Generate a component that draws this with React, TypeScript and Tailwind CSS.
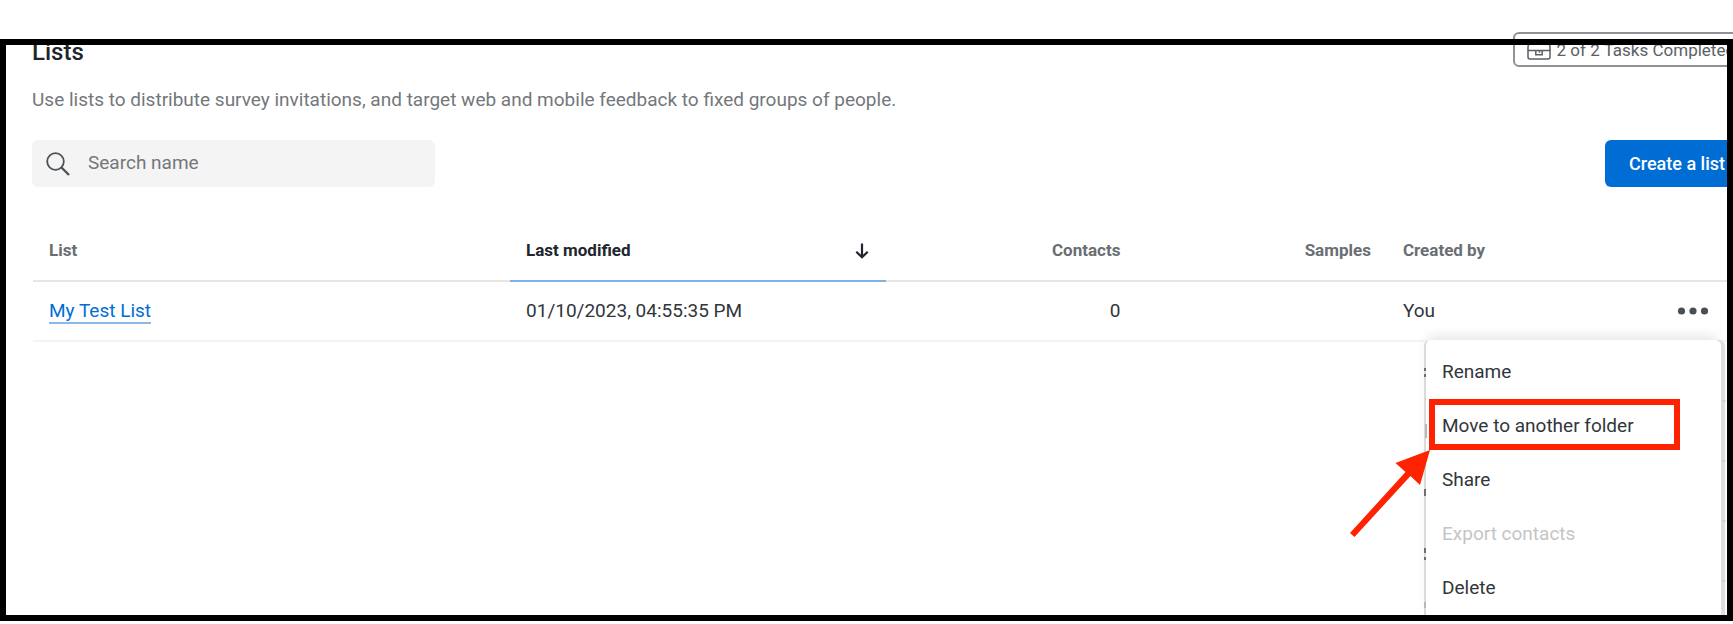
import type { ReactNode } from 'react';

interface MenuItem {
  label: string;
  disabled?: boolean;
  highlighted?: boolean;
}

const menuItems: MenuItem[] = [
  { label: 'Rename' },
  { label: 'Move to another folder', highlighted: true },
  { label: 'Share' },
  { label: 'Export contacts', disabled: true },
  { label: 'Delete' },
];

function TasksIcon() {
  return (
    <svg className="w-6 h-6 flex-shrink-0" viewBox="0 0 24 24" fill="none" stroke="#5b6065" strokeWidth="1.5" aria-hidden="true">
      <path d="M1 11.500V8Q1 4.500 4.500 4.500h15Q23 4.500 23 8v3.500" />
      <path d="M1 11.500h22V18q0 2-2 2H3q-2 0-2-2z" />
      <path d="M8.800 11.500v4.200h6.400v-4.200M12.500 11.500v2.200" />
    </svg>
  );
}

function SearchIcon() {
  return (
    <svg className="w-6 h-6 flex-shrink-0" viewBox="0 0 24 24" fill="none" stroke="#4d5359" strokeWidth="1.8" aria-hidden="true">
      <circle cx="9.5" cy="9.5" r="8.3" />
      <path d="M15.5 15.5 23 23" strokeWidth="2.4" />
    </svg>
  );
}

function SortArrow() {
  return (
    <svg className="w-4 h-4" viewBox="0 0 16 16" fill="none" stroke="#20262c" strokeWidth="2.2" aria-hidden="true">
      <path d="M8 .5v14M2.3 8.8 8 14.3l5.7-5.5" />
    </svg>
  );
}

function Dots() {
  return (
    <svg className="w-8 h-2" viewBox="0 0 32 8" fill="#4a4f55" aria-hidden="true">
      <circle cx="4.5" cy="4" r="3.6" />
      <circle cx="16" cy="4" r="3.6" />
      <circle cx="27.5" cy="4" r="3.6" />
    </svg>
  );
}

function HeaderCell({ children, className = '' }: { children?: ReactNode; className?: string }) {
  return (
    <th scope="col" className={`h-[60px] px-4 text-[17px] font-bold border-b-2 ${className}`}>
      {children}
    </th>
  );
}

// slivers of the covered page that show along both edges of the menu
function MenuEdges() {
  return (
    <svg className="absolute top-0 -left-0.5 w-[302px] h-[284px] pointer-events-none" viewBox="0 0 302 284" fill="none" aria-hidden="true">
      <path d="M1 28v3M1 34v3M1 149v7M1 208v5M1 217v3" stroke="#50555a" strokeWidth="1.600" />
      <path d="M2 84v14M1 262v6" stroke="#b5b7b9" strokeWidth="2" />
      <path d="M298 61h4M298 121h4M298 181h4M298 241h4" stroke="#c9c9c9" />
    </svg>
  );
}

function RowMenu() {
  return (
    <div
      className="absolute top-[58px] right-7 w-[297px] py-[5px] bg-white rounded-t-md border-l-2 border-[#dadada] shadow-[4px_0_0_#dedede,0_-8px_12px_-4px_rgba(0,0,0,0.1)]"
      role="menu"
    >
      <MenuEdges />
      {menuItems.map((item) => (
        <div key={item.label} className="relative">
          <button
            role="menuitem"
            disabled={item.disabled}
            className="block w-full h-[54px] pl-4 text-left text-[19px] text-[#32363a] disabled:text-[#c4c5c6]"
          >
            {item.label}
          </button>
          {item.highlighted && (
            <>
              <span className="absolute top-0 left-[3px] w-[251px] h-[51px] border-6 border-[#ff2200] pointer-events-none" />
              <svg className="absolute top-[51px] right-[291px] w-20 h-[88px] pointer-events-none" viewBox="0 0 80 88" aria-hidden="true">
                <path d="M80 0 70 35 60.500 26 4.500 87 0 83 55.500 22 45.500 13z" fill="#ff2200" />
              </svg>
            </>
          )}
        </div>
      ))}
    </div>
  );
}

export default function App() {
  return (
    <div className="relative min-h-screen overflow-hidden bg-white font-['Roboto',sans-serif] text-[19px] text-[#32363a]">
      <main className="pt-8 pl-8 -mr-4">
        <div className="flex items-start justify-between">
          <h1 className="pt-1 text-2xl leading-8 font-medium text-[#20262c]">Lists</h1>
          <button className="flex items-center gap-1.5 h-[35px] pt-0.5 px-3 border-2 border-[#8f9296] rounded-md text-[17px] text-[#5b6065] whitespace-nowrap">
            <TasksIcon />
            2 of 2 Tasks Completed
          </button>
        </div>

        <p className="mt-5 leading-6 text-[#74777b]">
          Use lists to distribute survey invitations, and target web and mobile feedback to fixed groups of people.
        </p>

        <div className="mt-7 flex items-center justify-between">
          <label className="flex items-center gap-[18px] w-[403px] h-[47px] pl-3.5 rounded-md bg-[#f4f4f4]">
            <SearchIcon />
            <input
              type="text"
              aria-label="Search name"
              placeholder="Search name"
              className="flex-1 min-w-0 bg-transparent outline-none placeholder:text-[#74777b]"
            />
          </label>
          <button className="h-[47px] px-6 rounded-md bg-[#006dd5] text-lg font-medium text-white whitespace-nowrap">
            Create a list
          </button>
        </div>

        <div className="mt-[35px] pl-px">
          <table className="w-full table-fixed border-separate border-spacing-0 text-left">
            <thead>
              <tr>
                <HeaderCell className="w-[27.8%] border-[#e6e6e6] text-[#6a6e73]">List</HeaderCell>
                <HeaderCell className="w-[21.9%] border-[#7fb0e6] text-[#20262c]">
                  <span className="flex items-center justify-between">
                    Last modified
                    <SortArrow />
                  </span>
                </HeaderCell>
                <HeaderCell className="w-[14.6%] border-[#e6e6e6] text-right text-[#6a6e73]">Contacts</HeaderCell>
                <HeaderCell className="w-[14.6%] border-[#e6e6e6] text-right text-[#6a6e73]">Samples</HeaderCell>
                <HeaderCell className="w-[13%] border-[#e6e6e6] text-[#6a6e73]">Created by</HeaderCell>
                <HeaderCell className="border-[#e6e6e6]" />
              </tr>
            </thead>
            <tbody>
              <tr className="[&>td]:h-[60px] [&>td]:px-4 [&>td]:border-b-2 [&>td]:border-[#f4f4f4]">
                <td>
                  <a href="#" className="border-b-2 border-[#8ab8ea] text-[#006dd5]">My Test List</a>
                </td>
                <td>01/10/2023, 04:55:35 PM</td>
                <td className="text-right">0</td>
                <td />
                <td>You</td>
                <td className="relative">
                  <button aria-label="List actions" className="flex items-center ml-auto mr-6 h-8">
                    <Dots />
                  </button>
                  <RowMenu />
                </td>
              </tr>
            </tbody>
          </table>
        </div>
      </main>

      <div className="absolute inset-x-0 top-[39px] bottom-[3px] border-6 border-black pointer-events-none" />
    </div>
  );
}
